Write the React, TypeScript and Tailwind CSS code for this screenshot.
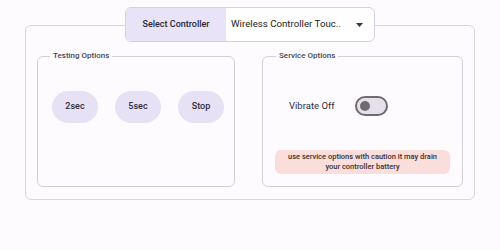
export default function App() {
  return (
    <div
      className="w-[500px] h-[250px] bg-[#fefbff] pt-[7px] text-[#1d1b20] overflow-hidden"
      style={{ fontFamily: "Roboto, 'Liberation Sans', sans-serif" }}
    >
      {/* controller select */}
      <div className="relative z-10 flex justify-center">
        <div className="flex h-[35px] w-[250px] rounded-[6px] border border-[#d6d0dc] overflow-hidden bg-white">
          <div className="w-[100px] bg-[#e8e3f6] flex items-center justify-center text-[9px] font-medium text-[#2a2635]">
            Select Controller
          </div>
          <div className="flex-1 flex items-center justify-between pl-[5px] pr-[11px] text-[9.7px] text-[#1d1b20] whitespace-nowrap">
            <span>Wireless Controller Touc..</span>
            <svg width="7" height="4" viewBox="0 0 7 4">
              <path d="M0 0 L7 0 L3.5 4 Z" fill="#3a3640" />
            </svg>
          </div>
        </div>
      </div>

      <div className="mx-[25px] -mt-[17px] h-[175px] rounded-[6px] border border-[#d9d4de] pl-[11px] pr-[11px] pt-[25px] pb-[12px]">
        <div className="grid grid-cols-[198px_1fr] gap-[27px] h-full">
          <fieldset className="min-w-0 border border-[#d3ced8] rounded-[6px] pl-[14px] pr-[10px]">
            <legend className="-ml-[2px] px-[3px] text-[8px] font-medium text-[#4a4650] leading-[10px]">
              Testing Options
            </legend>
            <div className="flex gap-[17px] pt-[30px]">
              {["2sec", "5sec", "Stop"].map((t) => (
                <button
                  key={t}
                  className="w-[46px] h-[32px] rounded-full bg-[#e7e1f5] text-[9px] font-medium text-[#2f2b38]"
                >
                  {t}
                </button>
              ))}
            </div>
          </fieldset>

          <fieldset className="min-w-0 border border-[#d3ced8] rounded-[6px] px-[12px]">
            <legend className="ml-[1px] px-[3px] text-[8px] font-medium text-[#4a4650] leading-[10px]">
              Service Options
            </legend>
            <div className="flex items-center pt-[35px] pl-[14px]">
              <span className="text-[9.5px] text-[#2f2b38] w-[66px]">Vibrate Off</span>
              <div className="w-[33px] h-[20px] rounded-full border-2 border-[#6f6a75] bg-[#e6e1e8] flex items-center pl-[3px]">
                <div className="w-[10px] h-[10px] rounded-full bg-[#6f6a75]" />
              </div>
            </div>
            <div className="mt-[34px] rounded-[6px] bg-[#f9dedb] py-[2px] text-center text-[7.5px] font-medium leading-[10px] text-[#3a2f30]">
              use service options with caution it may drain
              <br />
              your controller battery
            </div>
          </fieldset>
        </div>
      </div>
    </div>
  );
}
